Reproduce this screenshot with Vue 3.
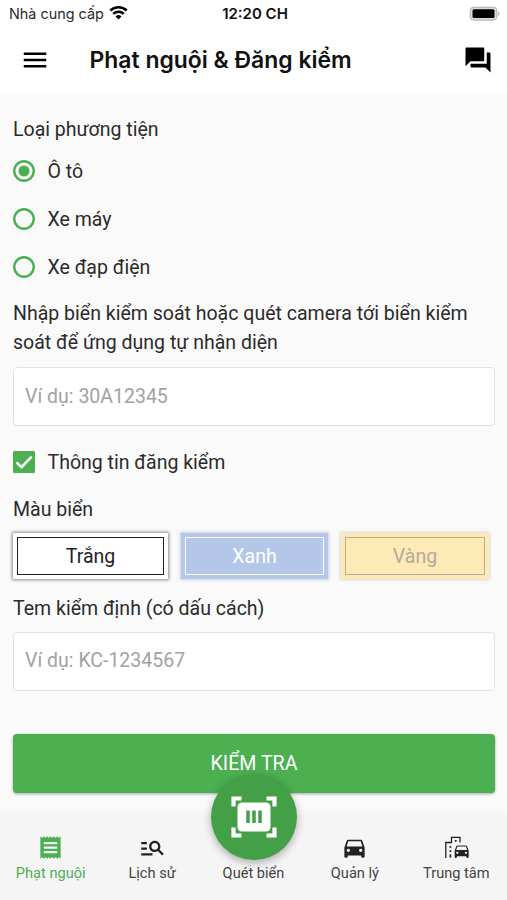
<script setup>
import { ref } from 'vue'

const vehicles = ['Ô tô', 'Xe máy', 'Xe đạp điện']
const vehicle = ref('Ô tô')
const plates = [
  { name: 'Trắng', kind: 'white' },
  { name: 'Xanh', kind: 'blue' },
  { name: 'Vàng', kind: 'yellow' },
]
const plateNumber = ref('')
const stamp = ref('')
const carPath =
  'M18.92 6.01C18.72 5.42 18.16 5 17.5 5h-11c-.66 0-1.21.42-1.42 1.01L3 12v8c0 .55.45 1 1 1h1c.55 0 1-.45 1-1v-1h12v1c0 .55.45 1 1 1h1c.55 0 1-.45 1-1v-8l-2.08-5.99zM6.5 16c-.83 0-1.5-.67-1.5-1.5S5.67 13 6.5 13s1.5.67 1.5 1.5S7.33 16 6.5 16zm11 0c-.83 0-1.5-.67-1.5-1.5s.67-1.5 1.5-1.5 1.5.67 1.5 1.5-.67 1.5-1.5 1.5zM5 11l1.5-4.5h11L19 11H5z'
</script>

<template>
  <div class="screen">
    <div class="status">
      <div class="carrier">
        <span>Nhà cung cấp</span>
        <svg class="wifi" viewBox="0 0 18 14">
          <path d="M1.2 5.1a11.2 11.2 0 0 1 15.6 0" />
          <path d="M4 8.3a7.2 7.2 0 0 1 10 0" />
          <path class="dot" d="M6.2 10.7a4 4 0 0 1 5.6 0L9 13.6z" />
        </svg>
      </div>
      <div class="clock">12:20 CH</div>
      <svg class="battery" viewBox="0 0 32 16">
        <rect x="1.300" y="1.300" width="26.500" height="12.800" rx="3.500" fill="#ddd" stroke="#b9b9b9" stroke-width="1.200" />
        <rect x="3.500" y="3.300" width="22" height="8.800" rx="1.500" fill="#000" />
        <path d="M29.2 5.2q2.4 2.5 0 5z" fill="#aaa" />
      </svg>
    </div>

    <header class="header">
      <svg class="icon30 menu" viewBox="0 0 24 24"><path d="M3 18h18v-2H3v2zm0-5h18v-2H3v2zm0-7v2h18V6H3z" /></svg>
      <h1>Phạt nguội &amp; Đăng kiểm</h1>
      <svg class="icon30" viewBox="0 0 24 24"><path d="M21 6h-2v9H6v2c0 .55.45 1 1 1h11l4 4V7c0-.55-.45-1-1-1zm-4 6V3c0-.55-.45-1-1-1H3c-.55 0-1 .45-1 1v14l4-4h10c.55 0 1-.45 1-1z" /></svg>
    </header>

    <main class="form">
      <div class="label type-label">Loại phương tiện</div>
      <div class="radios">
        <div v-for="v in vehicles" :key="v" class="option" @click="vehicle = v">
          <svg class="radio" viewBox="0 0 22 22">
            <circle cx="11" cy="11" r="9.800" />
            <circle v-if="vehicle === v" class="mark" cx="11" cy="11" r="5.500" />
          </svg>
          <span>{{ v }}</span>
        </div>
      </div>
      <p class="hint">Nhập biển kiểm soát hoặc quét camera tới biển kiểm soát để ứng dụng tự nhận diện</p>
      <input v-model="plateNumber" class="field" placeholder="Ví dụ: 30A12345" />
      <div class="option check-row">
        <svg class="check" viewBox="0 0 22 22"><path d="M3.5 11.3l5 4.9L18.7 5.6" /></svg>
        <span>Thông tin đăng kiểm</span>
      </div>
      <div class="label color-label">Màu biển</div>
      <div class="plates">
        <div v-for="p in plates" :key="p.kind" class="plate" :class="p.kind">
          <span>{{ p.name }}</span>
        </div>
      </div>
      <div class="label stamp-label">Tem kiểm định (có dấu cách)</div>
      <input v-model="stamp" class="field" placeholder="Ví dụ: KC-1234567" />
      <button class="submit">KIỂM TRA</button>
    </main>

    <nav class="nav">
      <div class="tab active">
        <svg viewBox="0 0 24 24"><path d="M18 17H6v-2h12v2zm0-4H6v-2h12v2zm0-4H6V7h12v2zM3 22l1.5-1.5L6 22l1.5-1.5L9 22l1.5-1.5L12 22l1.5-1.5L15 22l1.5-1.5L18 22l1.5-1.5L21 22V2l-1.5 1.5L18 2l-1.5 1.5L15 2l-1.5 1.5L12 2l-1.5 1.5L9 2 7.5 3.5 6 2 4.5 3.5 3 2v20z" /></svg>
        <span>Phạt nguội</span>
      </div>
      <div class="tab">
        <svg viewBox="0 0 24 24"><path d="M7 9H2V7h5v2zm0 3H2v2h5v-2zm13.59 7l-3.83-3.83c-.8.52-1.74.83-2.76.83-2.76 0-5-2.24-5-5s2.24-5 5-5 5 2.24 5 5c0 1.02-.31 1.96-.83 2.75L22 17.59 20.59 19zM17 11c0-1.65-1.35-3-3-3s-3 1.35-3 3 1.35 3 3 3 3-1.35 3-3zM2 19h10v-2H2v2z" /></svg>
        <span>Lịch sử</span>
      </div>
      <div class="tab scan">
        <div class="fab">
          <svg viewBox="0 0 46 42">
            <path d="M2.500 10.500V2.500H10.500M35.500 2.500h8V10.500M43.500 31.500v8h-8M10.500 39.500h-8v-8" fill="none" stroke="#fff" stroke-width="4.200" />
            <rect x="6.500" y="6.500" width="33" height="29" rx="4.500" fill="#fff" />
            <path d="M17 14.500v12.500M23 14.500v12.500M29 14.500v12.500" stroke="#43a047" stroke-width="3.500" />
          </svg>
        </div>
        <span>Quét biển</span>
      </div>
      <div class="tab">
        <svg viewBox="0 0 24 24"><path :d="carPath" /></svg>
        <span>Quản lý</span>
      </div>
      <div class="tab">
        <svg viewBox="0 0 27 27">
          <path d="M2.800 24V8.500h5.700V3.300h8.500v5.200" fill="none" stroke="#222" stroke-width="1.300" />
          <path d="M6.500 12h1.800v1.800h-1.800zM6.500 16.300h1.800v1.800h-1.800zM6.500 20.600h1.800v2.800h-1.800zM11.800 6h1.800v1.800h-1.800z" />
          <g transform="translate(9.300 7.500) scale(.78)"><path :d="carPath" /></g>
        </svg>
        <span>Trung tâm</span>
      </div>
    </nav>
  </div>
</template>

<style>
body {
  background: #fafafa;
}
</style>

<style scoped>
.screen {
  width: 507px;
  height: 900px;
  display: flex;
  flex-direction: column;
  overflow: hidden;
  background: #fafafa;
  color: #2b2b2b;
  font-family: Roboto, sans-serif;
}
.status {
  height: 28px;
  padding: 0 6px 0 9px;
  display: grid;
  grid-template-columns: 1fr auto 1fr;
  align-items: center;
  background: #fff;
  font: 14.4px Inter, sans-serif;
}
.carrier {
  display: flex;
  align-items: center;
  gap: 5.5px;
  height: 26px;
  margin-bottom: 2px;
  white-space: nowrap;
}
.wifi {
  width: 19px;
  height: 15px;
  margin-bottom: 1px;
  fill: none;
  stroke: #000;
  stroke-width: 2.4;
}
.wifi .dot {
  fill: #000;
  stroke: none;
}
.clock {
  height: 28px;
  line-height: 27px;
  font-size: 15px;
  font-weight: 600;
  color: #111;
}
.battery {
  width: 32px;
  height: 16px;
  justify-self: end;
  margin-bottom: 1px;
}
.header {
  height: 66px;
  box-sizing: border-box;
  padding: 0 14px 2px 20px;
  display: flex;
  align-items: center;
  background: #fff;
}
.icon30 {
  width: 30px;
  height: 30px;
}
.icon30.menu {
  margin-bottom: 1px;
}
h1 {
  flex: 1;
  margin: 0 0 1px 39.5px;
  font: 600 22.95px Inter, sans-serif;
  color: #111;
}
.form {
  flex: 1;
  padding: 0 12px 0 13px;
  display: flex;
  flex-direction: column;
  font-size: 19.53px;
}
.label {
  height: 30px;
  line-height: 32px;
}
.type-label {
  margin-top: 20px;
}
.radios {
  margin-top: 3.5px;
}
.option {
  height: 47.7px;
  display: flex;
  align-items: center;
  gap: 12.5px;
}
.option span {
  padding-top: 1px;
}
.radio {
  width: 22px;
  height: 22px;
  fill: none;
  stroke: #4caf50;
  stroke-width: 2.5;
}
.radio .mark {
  fill: #4caf50;
  stroke: none;
}
.hint {
  margin: 8px 0 10.5px;
  line-height: 29px;
}
.field {
  width: 100%;
  height: 59px;
  flex: none;
  box-sizing: border-box;
  padding: 0 11px 1px;
  border: 1px solid #e2e2e2;
  border-radius: 4px;
  background: #fff;
  outline: none;
  font: 19.5px Roboto, sans-serif;
}
.field::placeholder {
  color: #a2a2a2;
}
.check-row {
  margin-top: 12px;
}
.check {
  width: 22px;
  height: 22px;
  background: #4caf50;
  border-radius: 1px;
  fill: none;
  stroke: #fff;
  stroke-width: 2.5;
}
.color-label {
  margin-top: 8px;
}
.plates {
  margin: 9px 6px 0 0;
  display: grid;
  grid-template-columns: 155px 147px 148px;
  justify-content: space-between;
}
.plate {
  height: 46px;
  padding: 4px;
  box-sizing: border-box;
  display: flex;
}
.plate span {
  flex: 1;
  display: grid;
  place-items: center;
  padding-top: 1px;
  border: 1.5px solid;
}
.white {
  background: #fff;
  color: #222;
  box-shadow: 0 0 3px 1px #888;
}
.blue {
  background: #b5c7e9;
  color: #fff;
  box-shadow: 0 0 3px 1px #c9cfdc;
}
.yellow {
  background: #fdeab5;
  color: #b3aaa0;
  box-shadow: 0 0 3px 1px #ddd8cc;
}
.stamp-label {
  margin: 14px 0 9px;
}
.submit {
  height: 59px;
  flex: none;
  margin-top: 43px;
  padding: 0;
  border: 0;
  border-radius: 4px;
  background: #4caf50;
  box-shadow: 0 1px 3px rgba(0, 0, 0, 0.35);
  color: #fff;
  font: 19.6px Roboto, sans-serif;
}
.nav {
  height: 85px;
  display: grid;
  grid-template-columns: repeat(5, 1fr);
  background: #f5f5f5;
  box-shadow: 0 -2px 6px 1px #f5f5f5;
}
.tab {
  display: flex;
  flex-direction: column;
  align-items: center;
  justify-content: flex-end;
  padding-bottom: 18px;
  gap: 3px;
  font-size: 14.6px;
  line-height: 18px;
  color: #444;
}
.tab svg {
  width: 27px;
  height: 27px;
  fill: #222;
}
.active,
.tab.active svg {
  color: #4caf50;
  fill: #4caf50;
}
.scan {
  position: relative;
}
.fab {
  position: absolute;
  left: 50%;
  top: -41px;
  width: 86px;
  height: 86px;
  margin-left: -42.5px;
  border-radius: 50%;
  display: grid;
  place-items: center;
  background: #43a047;
  box-shadow: 0 3px 8px rgba(0, 0, 0, 0.3);
}
.tab .fab svg {
  width: 46px;
  height: 42px;
}
</style>
